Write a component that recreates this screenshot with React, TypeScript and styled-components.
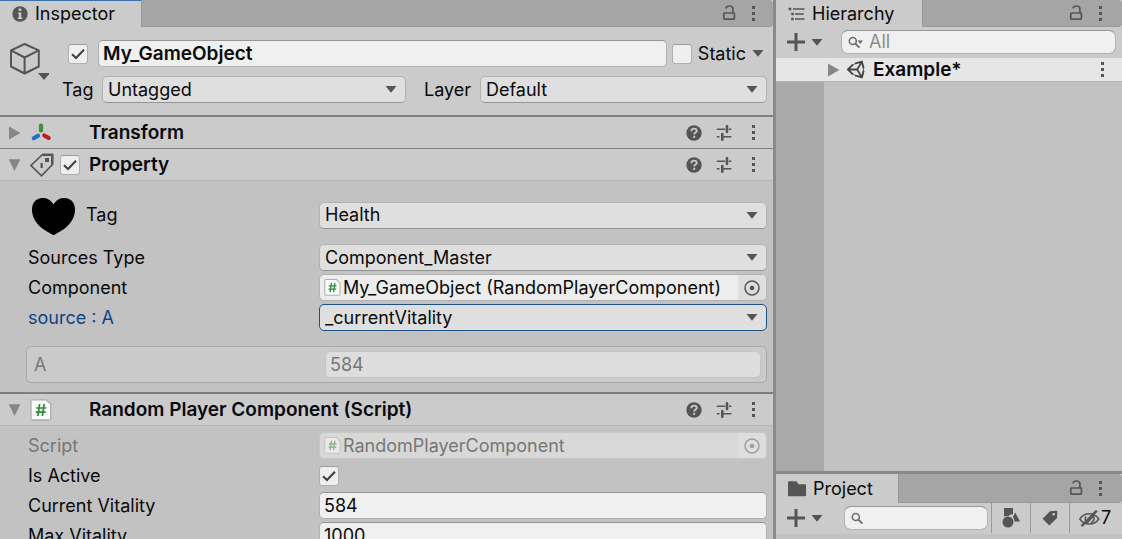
import React, { useId } from "react";
import styled, { createGlobalStyle, css } from "styled-components";

const GlobalStyle = createGlobalStyle`
  * { box-sizing: border-box; }
  body { margin: 0; background: #c2c2c2; }
  body, button, input, select {
    font-family: Inter, "Liberation Sans", sans-serif;
    font-size: 18px;
    line-height: 22px;
    color: #090909;
  }
`;

/* ---------- layout ---------- */

const Editor = styled.div`
  display: grid;
  grid-template-columns: minmax(0, 1fr) 346px;
  gap: 3px;
  height: 100vh;
  overflow: hidden;
  background: #8a8a8a;
`;

const Panel = styled.section`
  display: flex;
  flex-direction: column;
  min-width: 0;
  min-height: 0;
  overflow: hidden;
  background: #c2c2c2;
`;

const SideColumn = styled.div`
  display: grid;
  grid-template-rows: minmax(0, 1fr) 65px;
  gap: 3px;
  min-height: 0;
`;

const TabBar = styled.header<{ $tall?: boolean }>`
  display: flex;
  flex: none;
  align-items: stretch;
  height: ${(p) => (p.$tall ? 29 : 27)}px;
  background: #cbcbcb;
`;

const TabBarRest = styled.div<{ $end: number }>`
  display: flex;
  flex: 1;
  align-items: center;
  justify-content: flex-end;
  gap: 10px;
  padding-right: ${(p) => p.$end}px;
  background: #a5a5a5;
  border-bottom: 1px solid #999999;
  border-left: 1px solid #999999;
  border-radius: 0 4px 4px 0;
`;

const Tab = styled.button<{ $width: number; $focused?: boolean }>`
  display: flex;
  align-items: center;
  gap: 7px;
  width: ${(p) => p.$width}px;
  padding: 0 0 0 12px;
  border: 0;
  border-top: ${(p) => (p.$focused ? "1px solid #3a72b0" : "0")};
  background: #cbcbcb;
`;

const IconButton = styled.button`
  display: flex;
  flex: none;
  align-items: center;
  justify-content: center;
  padding: 0;
  border: 0;
  background: none;
  color: #555555;
`;

/* ---------- controls ---------- */

const Stack = styled.span<{ $grow?: boolean }>`
  display: grid;
  flex: ${(p) => (p.$grow ? "1" : "none")};
  justify-self: ${(p) => (p.$grow ? "stretch" : "start")};
  min-width: 0;
  align-items: center;
  > * { grid-area: 1 / 1; }
  > svg { pointer-events: none; }
`;

const CheckInput = styled.input`
  appearance: none;
  width: 20px;
  height: 20px;
  margin: 0;
  border: 1px solid #b0b0b0;
  border-top-color: #9c9c9c;
  border-radius: 3px;
  background: #efefef;
  & + svg { visibility: hidden; justify-self: center; }
  &:checked + svg { visibility: visible; }
`;

const fieldBox = css`
  width: 100%;
  min-width: 0;
  height: 27px;
  margin: 0;
  border: 1px solid #b2b2b2;
  border-radius: 5px;
  outline: 0;
`;

const SelectInput = styled.select<{ $active?: boolean }>`
  ${fieldBox}
  appearance: none;
  padding: 0 28px 0 5px;
  background: #dfdfdf;
  border-bottom-color: #939393;
  ${(p) => p.$active && css`border-color: #1d5087;`}
`;

const SelectArrow = styled.svg`
  justify-self: end;
  margin-right: 9px;
`;

const TextInput = styled.input<{ $strong?: boolean }>`
  ${fieldBox}
  padding: 0 4px;
  background: #f0f0f0;
  border-top-color: #969696;
  font-size: ${(p) => (p.$strong ? 19 : 18)}px;
  font-weight: ${(p) => (p.$strong ? 600 : 400)};
  &:disabled {
    border-color: #c3c3c3;
    background: #dddddd;
    color: #777777;
  }
`;

const ObjectBox = styled.div<{ $disabled?: boolean }>`
  ${fieldBox}
  display: flex;
  align-items: center;
  overflow: hidden;
  padding-left: 4px;
  background: #ededed;
  ${(p) => p.$disabled && css`border-color: #c8c8c8; background: #d8d8d8;`}
  > svg { flex: none; opacity: ${(p) => (p.$disabled ? 0.5 : 1)}; }
`;

const ObjectName = styled.input`
  flex: 1;
  min-width: 0;
  padding: 0 0 0 2px;
  border: 0;
  outline: 0;
  background: none;
  &:disabled { color: #777777; }
`;

const Picker = styled(IconButton)`
  width: 28px;
  height: 25px;
  background: #dedede;
  &:disabled { color: #a0a0a0; }
`;

const SearchBox = styled.label<{ $inset: number }>`
  display: flex;
  flex: 1;
  align-items: center;
  gap: 6px;
  min-width: 0;
  height: 24px;
  margin-left: ${(p) => p.$inset}px;
  padding-left: 6px;
  border: 1px solid #b2b2b2;
  border-top-color: #969696;
  border-radius: 7px;
  background: #f0f0f0;
`;

const SearchInput = styled.input`
  flex: 1;
  min-width: 0;
  padding: 0;
  border: 0;
  outline: 0;
  background: none;
  &::placeholder { color: #8b8b8b; opacity: 1; }
`;

/* ---------- inspector ---------- */

const ObjectHeader = styled.div`
  display: flex;
  flex: none;
  gap: 21px;
  padding: 13px 6px 12px 9px;
  background: #cbcbcb;
`;

const CubeButton = styled(IconButton)`
  align-self: flex-start;
  align-items: flex-end;
  width: 40px;
  height: 40px;
  margin-right: -8px;
`;

const HeaderLines = styled.div`
  display: flex;
  flex: 1;
  flex-direction: column;
  gap: 9px;
  min-width: 0;
`;

const NameLine = styled.div`
  display: grid;
  grid-template-columns: 20px minmax(0, 1fr) auto;
  align-items: center;
  gap: 10px;
  padding-left: 6px;
`;

const StaticGroup = styled.div`
  display: flex;
  align-items: center;
  gap: 6px;
  margin-left: -5px;
  padding-right: 3px;
`;

const TagLine = styled.div`
  display: grid;
  grid-template-columns: 34px 304fr 62px 287fr;
  align-items: center;
  column-gap: 6px;
`;

const LayerLabel = styled.label`
  padding-left: 12px;
`;

const ComponentHeader = styled.div<{ $rule: number; $open?: boolean }>`
  display: grid;
  grid-template-columns: 13px 21px 20px minmax(0, 1fr) auto;
  flex: none;
  align-items: center;
  column-gap: 9px;
  height: ${(p) => 31 + p.$rule + (p.$open ? 1 : 0)}px;
  padding: 0 13px 0 8px;
  border-top: ${(p) => p.$rule}px solid #7f7f7f;
  border-bottom: ${(p) => (p.$open ? "1px solid #b5b5b5" : "0")};
  background: #cbcbcb;
`;

const ComponentTitle = styled.h2`
  margin: 0;
  overflow: hidden;
  font-size: 19px;
  font-weight: 600;
  line-height: 24px;
  white-space: nowrap;
`;

const HeaderTools = styled.div`
  display: flex;
  align-items: center;
  gap: 14px;
`;

const Body = styled.div<{ $top: number; $bottom: number }>`
  display: flex;
  flex: none;
  flex-direction: column;
  gap: 3px;
  padding: ${(p) => `${p.$top}px 6px ${p.$bottom}px 28px`};
`;

const Row = styled.div`
  display: grid;
  grid-template-columns: 291px minmax(0, 1fr);
  align-items: center;
  min-height: 27px;
`;

const TagRow = styled(Row)`
  height: 40px;
  margin-bottom: 6px;
`;

const RowLabel = styled.label<{ $tone?: "muted" | "edited" }>`
  color: ${(p) => (p.$tone === "muted" ? "#777777" : p.$tone === "edited" ? "#0f4386" : "#090909")};
`;

const TagLabel = styled(RowLabel)`
  display: flex;
  align-items: center;
  gap: 10px;
  padding-left: 3px;
`;

const ValueBox = styled.div`
  display: grid;
  grid-template-columns: 291px minmax(0, 1fr);
  align-items: center;
  height: 37px;
  margin: 12px 0 0 -2px;
  padding: 0 5px 0 7px;
  border: 1px solid #a8a8a8;
  border-radius: 5px;
  background: #cacaca;
`;

/* ---------- hierarchy and project ---------- */

const Toolbar = styled.div<{ $end: number }>`
  display: flex;
  flex: none;
  align-items: center;
  height: 31px;
  padding: 0 ${(p) => p.$end}px 1px 11px;
  background: #cbcbcb;
`;

const AddButton = styled(IconButton)`
  gap: 6px;
`;

const SceneRow = styled.div`
  display: flex;
  flex: none;
  align-items: center;
  height: 24px;
  padding: 0 13px 0 51px;
  border-bottom: 1px solid #b4b4b4;
  background: #e6e6e6;
`;

const SceneName = styled.span`
  flex: 1;
  padding-left: 8px;
  font-size: 19px;
  font-weight: 600;
`;

const SceneLogo = styled.svg`
  margin-left: 6px;
`;

const Tree = styled.div`
  flex: 1;
  border-left: 48px solid #aaaaaa;
`;

const FilterButton = styled(IconButton)`
  width: 39px;
  height: 30px;
  border-left: 1px solid #999999;
`;

const FilterGroup = styled.div`
  display: flex;
  align-self: flex-start;
  margin-left: 3px;
`;

const HiddenButton = styled(FilterButton)`
  width: 53px;
  gap: 1px;
  padding-left: 9px;
  justify-content: flex-start;
`;

const Count = styled.span`
  color: #090909;
`;

/* ---------- drawings ---------- */

const Caret = () => (
  <svg width="12" height="7" viewBox="0 0 12 7" fill="#55554f" aria-hidden>
    <path d="M.5 0h11L6 6.800z" />
  </svg>
);

const Fold = ({ open, label }: { open?: boolean; label: string }) => (
  <IconButton aria-label={label} aria-expanded={!!open}>
    <svg width="13" height="14" viewBox="0 0 13 14" fill="#868686" aria-hidden>
      <path d={open ? "M.7 1.2h11.7L6.5 13z" : "M1 .5 12.4 7 1 13.5z"} />
    </svg>
  </IconButton>
);

const Tick = () => (
  <svg width="14" height="14" viewBox="0 0 14 14" fill="none" stroke="#3f3f3f" strokeWidth="2" aria-hidden>
    <path d="M1 7.2 5 11l8-8.3" />
  </svg>
);

const Dots = ({ label }: { label: string }) => (
  <IconButton aria-label={label}>
    <svg width="14" height="15" viewBox="0 0 14 15" fill="#555" aria-hidden>
      <path d="M6 0h3v3H6zM6 6h3v3H6zM6 12h3v3H6z" />
    </svg>
  </IconButton>
);

const Lock = () => (
  <IconButton aria-label="Lock">
    <svg width="14" height="16" viewBox="0 0 14 16" fill="none" stroke="#555" strokeWidth="1.7" aria-hidden>
      <rect x="1.8" y="8" width="10.6" height="6.200" rx=".6" />
      <path d="M4 3.300C4.200 1.800 5.300 1 7.300 1c2.600 0 3.600 1 3.600 2.800V8" />
    </svg>
  </IconButton>
);

const Info = () => (
  <svg width="16" height="16" viewBox="0 0 16 16" aria-hidden>
    <circle cx="8" cy="8" r="7.7" fill="#555" />
    <path d="M6.700 2.600h2.600v2.300H6.700zM6 6.400h3.300v5h1v1.500H5.900v-1.500h.9V7.800H6z" fill="#cbcbcb" />
  </svg>
);

const Help = () => (
  <IconButton aria-label="Help">
    <svg width="16" height="16" viewBox="0 0 16 16" aria-hidden>
      <circle cx="8" cy="8" r="7.700" fill="#555" />
      <path d="M5.300 6.200C5.300 4.500 6.400 3.600 8 3.600s2.700.9 2.700 2.300C10.700 7.600 8.200 7.600 8.200 9.600" fill="none" stroke="#cbcbcb" strokeWidth="1.800" />
      <path d="M7.200 10.800h2v2h-2z" fill="#cbcbcb" />
    </svg>
  </IconButton>
);

const Presets = () => (
  <IconButton aria-label="Presets">
    <svg width="16" height="16" viewBox="0 0 16 16" fill="none" stroke="#555" aria-hidden>
      <path d="M.8 4.300h8.400M13 4.300h2.400M.8 11.700h2.700M7 11.700h8.400" strokeWidth="1.500" />
      <path d="M11 1.200v5.800M6.300 9v5.800" strokeWidth="2.600" strokeLinecap="round" />
    </svg>
  </IconButton>
);

const Cube = () => (
  <svg width="40" height="38" viewBox="0 0 40 38" fill="none" stroke="#555" strokeWidth="2" strokeLinejoin="round" aria-hidden>
    <path d="M15.600 2 29.800 8.300V24.500L15.600 31.500 2 24.500V8.300zM2 8.300 15.600 15.500 29.800 8.300M15.600 15.500v16" />
    <path d="M29 31h12l-6 7z" fill="#55554f" stroke="none" />
  </svg>
);

const Axes = () => (
  <svg width="22" height="22" viewBox="0 0 22 22" strokeWidth="4.200" strokeLinecap="round" aria-hidden>
    <path d="M11 3.500v5" stroke="#3f8f3f" />
    <path d="M8 13.800 3.800 16.300" stroke="#1d6fd0" />
    <path d="M14.300 13.500 18.700 16" stroke="#c01b1b" />
  </svg>
);

const TagOutline = () => (
  <svg width="24" height="24" viewBox="0 0 24 24" fill="none" stroke="#555" strokeWidth="1.700" aria-hidden>
    <path d="M12.500 1.500H22.500V11.500L11.500 22.800 1 12.500z" />
    <path d="M12.500 1.800H22.200V11.600" strokeWidth="2.200" />
    <path d="M15 5h4v4h-4zM10.500 10h2.200v5h-2.200z" fill="#555" stroke="none" />
  </svg>
);

const Heart = () => (
  <svg width="45" height="40" viewBox="0 0 45 40" fill="#000" aria-hidden>
    <path d="M22.500 9.500C25.500 4.500 29 3 33.500 3 40 3 44 8 44 14.500 44 21 41 27 35.500 32 31 36 26 37.500 22.500 40.500 19 37.500 14 36 9.500 32 4 27 1 21 1 14.500 1 8 5 3 11.500 3c4.500 0 8 1.500 11 6.500z" />
  </svg>
);

const ScriptIcon = ({ size }: { size: number }) => (
  <svg width={size} height={size} viewBox="0 0 22 22" aria-hidden>
    <path d="M2.500.8h13.700l4.500 4.500v14.200a1.500 1.500 0 0 1-1.500 1.500H2.500A1.500 1.500 0 0 1 1 19.500V2.300A1.500 1.500 0 0 1 2.500.8z" fill="#fbfbfb" stroke="#adadad" strokeWidth="1.300" />
    <path d="M9.600 5 7.900 17M14.100 5l-1.700 12M6.200 9h10M5.800 13.200h10" fill="none" stroke="#2f8a38" strokeWidth="1.700" />
  </svg>
);

const Target = () => (
  <svg width="16" height="16" viewBox="0 0 16 16" aria-hidden>
    <circle cx="8" cy="8" r="7" fill="none" stroke="currentColor" strokeWidth="1.500" />
    <circle cx="8" cy="8" r="2.300" fill="currentColor" />
  </svg>
);

const ListIcon = () => (
  <svg width="17" height="14" viewBox="0 0 17 14" fill="#555" aria-hidden>
    <path d="M.5.700h2.800v2.500H.5zM5 1.200h11.500v1.500H5zM3.200 5.700h2.600v2.500H3.200zM7 6.200h8.700v1.500H7zM3.200 10.700h2.600v2.500H3.200zM7 11.200h9.500v1.500H7z" />
  </svg>
);

const Folder = () => (
  <svg width="18" height="16" viewBox="0 0 18 16" fill="#555" aria-hidden>
    <path d="M1 .3h7.500l2 3H17a1 1 0 0 1 1 1v10a1 1 0 0 1-1 1H1a1 1 0 0 1-1-1v-13a1 1 0 0 1 1-1z" />
  </svg>
);

const Plus = () => (
  <svg width="18" height="18" viewBox="0 0 18 18" stroke="#555" strokeWidth="3" aria-hidden>
    <path d="M9 0v18M0 9h18" />
  </svg>
);

const Magnifier = ({ menu }: { menu?: boolean }) => (
  <svg width={menu ? 15 : 13} height="13" viewBox={menu ? "0 0 15 13" : "0 0 13 13"} fill="none" stroke="#6e6e6e" strokeWidth="1.600" aria-hidden>
    <circle cx="4.800" cy="5" r="3.500" />
    <path d="M7.400 7.600l4 4" strokeWidth="2" />
    {menu && <path d="M9.500 4.500H15L12.200 8z" fill="#6e6e6e" stroke="none" />}
  </svg>
);

const UnityLogo = () => (
  <SceneLogo width="19" height="19" viewBox="0 0 512 512" fill="#444" aria-hidden>
    <path d="M498.110 206.400 445.310 14.720 248.200 66.080 219 116.140l-59.200-.43L15.540 256l144.280 140.320 59.170-.43 29.240 50 197.080 51.360 52.800-191.620-30-49.630zM223.770 124.200 374.550 86.510 288 232.330H114.870zm0 263.630L114.870 279.710H288l86.550 145.810zm193 14L330.170 256l86.580-145.840L458.560 256z" />
  </SceneLogo>
);

const Shapes = () => (
  <svg width="18" height="20" viewBox="0 0 18 20" fill="#555" aria-hidden>
    <path d="M2 0h9v6.300A6.800 6.800 0 0 0 6 8.200 6 6 0 0 0 2 8.500zM13.200 4.500 18 13.500h-5.500A7 7 0 0 0 10.800 9z" />
    <circle cx="6" cy="14" r="5.500" />
  </svg>
);

const TagSolid = () => (
  <svg width="16" height="16" viewBox="0 0 16 16" aria-hidden>
    <path d="M8 1.200 14.500.800a.8.800 0 0 1 .8.800l-.3 6.300L7.300 15.400.6 8.700z" fill="#555" />
    <circle cx="11.700" cy="4.300" r="1.300" fill="#cbcbcb" />
  </svg>
);

const EyeOff = () => (
  <svg width="21" height="17" viewBox="0 0 21 17" fill="none" stroke="#555" strokeWidth="1.400" aria-hidden>
    <path d="M.8 9C3 5.600 6.300 3.800 10.200 3.800S17.500 5.600 19.800 9c-2.300 3.400-5.600 5-9.600 5S3 12.400.8 9z" />
    <path d="M7.200 6.500a4.200 4.200 0 0 0 1 6.300L14.500 6A4.600 4.600 0 0 1 12 12.600" strokeWidth="1.500" />
    <path d="M2.500 16.200 17.800.600" strokeWidth="2.400" />
  </svg>
);

/* ---------- composed controls ---------- */

const Check = ({ id, label, on }: { id?: string; label?: string; on?: boolean }) => (
  <Stack>
    <CheckInput type="checkbox" id={id} aria-label={label} defaultChecked={on} />
    <Tick />
  </Stack>
);

const Dropdown = ({ id, value, active }: { id: string; value: string; active?: boolean }) => (
  <Stack $grow>
    <SelectInput id={id} $active={active} defaultValue={value}>
      <option>{value}</option>
    </SelectInput>
    <SelectArrow width="12" height="7" viewBox="0 0 12 7" fill="#55554f" aria-hidden>
      <path d="M.5 0h11L6 6.800z" />
    </SelectArrow>
  </Stack>
);

const ObjectField = ({ id, value, disabled }: { id: string; value: string; disabled?: boolean }) => (
  <ObjectBox $disabled={disabled}>
    <ScriptIcon size={17} />
    <ObjectName id={id} defaultValue={value} readOnly disabled={disabled} />
    <Picker aria-label="Select object" disabled={disabled}>
      <Target />
    </Picker>
  </ObjectBox>
);

type FieldProps = {
  label: string;
  tone?: "muted" | "edited";
  children: (id: string) => React.ReactNode;
};

const Field = ({ label, tone, children }: FieldProps) => {
  const id = useId();
  return (
    <Row>
      <RowLabel htmlFor={id} $tone={tone}>{label}</RowLabel>
      {children(id)}
    </Row>
  );
};

type HeadProps = {
  title: string;
  icon: React.ReactNode;
  rule: number;
  open?: boolean;
  toggle?: boolean;
};

const Head = ({ title, icon, rule, open, toggle }: HeadProps) => (
  <ComponentHeader $rule={rule} $open={open}>
    <Fold open={open} label={`Fold ${title}`} />
    {icon}
    {toggle ? <Check label={`Enable ${title}`} on /> : <span />}
    <ComponentTitle>{title}</ComponentTitle>
    <HeaderTools>
      <Help />
      <Presets />
      <Dots label={`${title} menu`} />
    </HeaderTools>
  </ComponentHeader>
);

type PanelTabsProps = {
  title: string;
  icon: React.ReactNode;
  width: number;
  end: number;
  focused?: boolean;
  tall?: boolean;
};

const PanelTabs = ({ title, icon, width, end, focused, tall }: PanelTabsProps) => (
  <TabBar $tall={tall}>
    <Tab $width={width} $focused={focused}>
      {icon}
      {title}
    </Tab>
    <TabBarRest $end={end}>
      <Lock />
      <Dots label={`${title} menu`} />
    </TabBarRest>
  </TabBar>
);

const Inspector = () => (
  <Panel aria-label="Inspector">
    <PanelTabs title="Inspector" icon={<Info />} width={141} end={13} focused />
    <ObjectHeader>
      <CubeButton aria-label="Object icon"><Cube /></CubeButton>
      <HeaderLines>
        <NameLine>
          <Check label="Active" on />
          <TextInput aria-label="Name" defaultValue="My_GameObject" $strong />
          <StaticGroup>
            <Check id="static" />
            <label htmlFor="static">Static</label>
            <IconButton aria-label="Static options"><Caret /></IconButton>
          </StaticGroup>
        </NameLine>
        <TagLine>
          <label htmlFor="object-tag">Tag</label>
          <Dropdown id="object-tag" value="Untagged" />
          <LayerLabel htmlFor="object-layer">Layer</LayerLabel>
          <Dropdown id="object-layer" value="Default" />
        </TagLine>
      </HeaderLines>
    </ObjectHeader>

    <Head title="Transform" icon={<Axes />} rule={2} />

    <Head title="Property" icon={<TagOutline />} rule={1} open toggle />
    <Body $top={14} $bottom={9}>
      <TagRow>
        <TagLabel htmlFor="property-tag"><Heart />Tag</TagLabel>
        <Dropdown id="property-tag" value="Health" />
      </TagRow>
      <Field label="Sources Type">{(id) => <Dropdown id={id} value="Component_Master" />}</Field>
      <Field label="Component">
        {(id) => <ObjectField id={id} value="My_GameObject (RandomPlayerComponent)" />}
      </Field>
      <Field label="source : A" tone="edited">
        {(id) => <Dropdown id={id} value="_currentVitality" active />}
      </Field>
      <ValueBox>
        <RowLabel htmlFor="value-a" $tone="muted">A</RowLabel>
        <TextInput id="value-a" defaultValue="584" disabled />
      </ValueBox>
    </Body>

    <Head title="Random Player Component (Script)" icon={<ScriptIcon size={22} />} rule={2} open />
    <Body $top={6} $bottom={6}>
      <Field label="Script" tone="muted">
        {(id) => <ObjectField id={id} value="RandomPlayerComponent" disabled />}
      </Field>
      <Field label="Is Active">{(id) => <Check id={id} on />}</Field>
      <Field label="Current Vitality">{(id) => <TextInput id={id} defaultValue="584" />}</Field>
      <Field label="Max Vitality">{(id) => <TextInput id={id} defaultValue="1000" />}</Field>
    </Body>
  </Panel>
);

const Hierarchy = () => (
  <Panel aria-label="Hierarchy">
    <PanelTabs title="Hierarchy" icon={<ListIcon />} width={146} end={15} />
    <Toolbar $end={6}>
      <AddButton aria-label="Create"><Plus /><Caret /></AddButton>
      <SearchBox $inset={18}>
        <Magnifier menu />
        <SearchInput type="text" aria-label="Search hierarchy" placeholder="All" />
      </SearchBox>
    </Toolbar>
    <SceneRow>
      <Fold label="Expand Example" />
      <UnityLogo />
      <SceneName>Example*</SceneName>
      <Dots label="Scene menu" />
    </SceneRow>
    <Tree />
  </Panel>
);

const Project = () => (
  <Panel aria-label="Project">
    <PanelTabs title="Project" icon={<Folder />} width={122} end={15} tall />
    <Toolbar $end={0}>
      <AddButton aria-label="Create asset"><Plus /><Caret /></AddButton>
      <SearchBox $inset={21}>
        <Magnifier />
        <SearchInput type="text" aria-label="Search project" />
      </SearchBox>
      <FilterGroup>
        <FilterButton aria-label="Filter by type"><Shapes /></FilterButton>
        <FilterButton aria-label="Filter by label"><TagSolid /></FilterButton>
        <HiddenButton aria-label="Hidden packages"><EyeOff /><Count>7</Count></HiddenButton>
      </FilterGroup>
    </Toolbar>
  </Panel>
);

export default function App() {
  return (
    <>
      <GlobalStyle />
      <Editor>
        <Inspector />
        <SideColumn>
          <Hierarchy />
          <Project />
        </SideColumn>
      </Editor>
    </>
  );
}
